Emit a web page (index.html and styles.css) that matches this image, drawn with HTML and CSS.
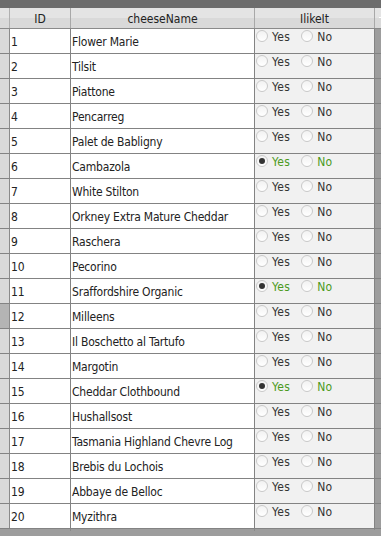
FILE: index.html
```html
<!DOCTYPE html>
<html>
<head>
<meta charset="utf-8">
<link rel="stylesheet" href="styles.css">
</head>
<body>
<div class="topbar"></div>
<div class="grid">
  <div class="row head">
    <div class="cell gut"></div>
    <div class="cell id">ID</div>
    <div class="cell name">cheeseName</div>
    <div class="cell like">IlikeIt</div>
    <div class="cell rest"><span class="tick"></span></div>
  </div>
  <div class="row"><div class="cell gut"></div><div class="cell id">1</div><div class="cell name">Flower Marie</div><div class="cell like"><span class="radio"></span><span class="lbl">Yes</span><span class="radio"></span><span class="lbl">No</span></div><div class="cell rest"></div></div>
  <div class="row"><div class="cell gut"></div><div class="cell id">2</div><div class="cell name">Tilsit</div><div class="cell like"><span class="radio"></span><span class="lbl">Yes</span><span class="radio"></span><span class="lbl">No</span></div><div class="cell rest"></div></div>
  <div class="row"><div class="cell gut"></div><div class="cell id">3</div><div class="cell name">Piattone</div><div class="cell like"><span class="radio"></span><span class="lbl">Yes</span><span class="radio"></span><span class="lbl">No</span></div><div class="cell rest"></div></div>
  <div class="row"><div class="cell gut"></div><div class="cell id">4</div><div class="cell name">Pencarreg</div><div class="cell like"><span class="radio"></span><span class="lbl">Yes</span><span class="radio"></span><span class="lbl">No</span></div><div class="cell rest"></div></div>
  <div class="row"><div class="cell gut"></div><div class="cell id">5</div><div class="cell name">Palet de Babligny</div><div class="cell like"><span class="radio"></span><span class="lbl">Yes</span><span class="radio"></span><span class="lbl">No</span></div><div class="cell rest"></div></div>
  <div class="row sel"><div class="cell gut"></div><div class="cell id">6</div><div class="cell name">Cambazola</div><div class="cell like"><span class="radio on"></span><span class="lbl">Yes</span><span class="radio"></span><span class="lbl">No</span></div><div class="cell rest"></div></div>
  <div class="row"><div class="cell gut"></div><div class="cell id">7</div><div class="cell name">White Stilton</div><div class="cell like"><span class="radio"></span><span class="lbl">Yes</span><span class="radio"></span><span class="lbl">No</span></div><div class="cell rest"></div></div>
  <div class="row"><div class="cell gut"></div><div class="cell id">8</div><div class="cell name">Orkney Extra Mature Cheddar</div><div class="cell like"><span class="radio"></span><span class="lbl">Yes</span><span class="radio"></span><span class="lbl">No</span></div><div class="cell rest"></div></div>
  <div class="row"><div class="cell gut"></div><div class="cell id">9</div><div class="cell name">Raschera</div><div class="cell like"><span class="radio"></span><span class="lbl">Yes</span><span class="radio"></span><span class="lbl">No</span></div><div class="cell rest"></div></div>
  <div class="row"><div class="cell gut"></div><div class="cell id">10</div><div class="cell name">Pecorino</div><div class="cell like"><span class="radio"></span><span class="lbl">Yes</span><span class="radio"></span><span class="lbl">No</span></div><div class="cell rest"></div></div>
  <div class="row sel"><div class="cell gut"></div><div class="cell id">11</div><div class="cell name">Sraffordshire Organic</div><div class="cell like"><span class="radio on"></span><span class="lbl">Yes</span><span class="radio"></span><span class="lbl">No</span></div><div class="cell rest"></div></div>
  <div class="row cur"><div class="cell gut"></div><div class="cell id">12</div><div class="cell name">Milleens</div><div class="cell like"><span class="radio"></span><span class="lbl">Yes</span><span class="radio"></span><span class="lbl">No</span></div><div class="cell rest"></div></div>
  <div class="row"><div class="cell gut"></div><div class="cell id">13</div><div class="cell name">Il Boschetto al Tartufo</div><div class="cell like"><span class="radio"></span><span class="lbl">Yes</span><span class="radio"></span><span class="lbl">No</span></div><div class="cell rest"></div></div>
  <div class="row"><div class="cell gut"></div><div class="cell id">14</div><div class="cell name">Margotin</div><div class="cell like"><span class="radio"></span><span class="lbl">Yes</span><span class="radio"></span><span class="lbl">No</span></div><div class="cell rest"></div></div>
  <div class="row sel"><div class="cell gut"></div><div class="cell id">15</div><div class="cell name">Cheddar Clothbound</div><div class="cell like"><span class="radio on"></span><span class="lbl">Yes</span><span class="radio"></span><span class="lbl">No</span></div><div class="cell rest"></div></div>
  <div class="row"><div class="cell gut"></div><div class="cell id">16</div><div class="cell name">Hushallsost</div><div class="cell like"><span class="radio"></span><span class="lbl">Yes</span><span class="radio"></span><span class="lbl">No</span></div><div class="cell rest"></div></div>
  <div class="row"><div class="cell gut"></div><div class="cell id">17</div><div class="cell name">Tasmania Highland Chevre Log</div><div class="cell like"><span class="radio"></span><span class="lbl">Yes</span><span class="radio"></span><span class="lbl">No</span></div><div class="cell rest"></div></div>
  <div class="row"><div class="cell gut"></div><div class="cell id">18</div><div class="cell name">Brebis du Lochois</div><div class="cell like"><span class="radio"></span><span class="lbl">Yes</span><span class="radio"></span><span class="lbl">No</span></div><div class="cell rest"></div></div>
  <div class="row"><div class="cell gut"></div><div class="cell id">19</div><div class="cell name">Abbaye de Belloc</div><div class="cell like"><span class="radio"></span><span class="lbl">Yes</span><span class="radio"></span><span class="lbl">No</span></div><div class="cell rest"></div></div>
  <div class="row"><div class="cell gut"></div><div class="cell id">20</div><div class="cell name">Myzithra</div><div class="cell like"><span class="radio"></span><span class="lbl">Yes</span><span class="radio"></span><span class="lbl">No</span></div><div class="cell rest"></div></div>
  <div class="row foot">
    <div class="cell gut"></div>
    <div class="cell id"></div>
    <div class="cell name"></div>
    <div class="cell like"></div>
    <div class="cell rest"></div>
  </div>
</div>
</body>
</html>
```
FILE: styles.css
```css
html, body {
  margin: 0;
  padding: 0;
  background: #9d9d9d;
  width: 381px;
  height: 536px;
  overflow: hidden;
}
body {
  font-family: "DejaVu Sans Condensed", "DejaVu Sans", sans-serif;
  font-size: 12px;
  color: #222;
}
.topbar {
  height: 8px;
  background: #6c6c6c;
}
.grid {
  display: flex;
  flex-direction: column;
}
.row {
  display: flex;
  height: 25px;
  box-sizing: border-box;
  border-bottom: 1px solid #838383;
}
.cell {
  box-sizing: border-box;
  border-right: 1px solid #838383;
  height: 100%;
  white-space: nowrap;
  overflow: hidden;
}
.gut { width: 10px; background: #d9d9d9; border-right-color: #8a8a8a; }
.id { width: 61px; background: #fff; display: flex; align-items: center; padding: 2px 0 0 1px; }
.name { width: 184px; background: #fff; display: flex; align-items: center; padding: 2px 0 0 1px; letter-spacing: -0.2px; }
.like { width: 120px; background: #f1f1f1; display: flex; align-items: flex-start; padding: 1px 0 0 1px; color: #333; }
.rest { flex: 1; border-right: 0; background: #9d9d9d; }
.cur .gut { background: #b4b4b4; }

.head {
  height: 21px;
  border-bottom: 1px solid #8a8a8a;
  background: linear-gradient(#e4e4e4, #e4e4e4 50%, #d9d9d9 50%, #d9d9d9);
}
.head .cell {
  background: transparent;
  justify-content: center;
  align-items: center;
  padding: 1px 0 0 0;
  color: #222;
  letter-spacing: 0;
  border-right-color: #a8a8a8;
}
.head .gut { border-right-color: #b0b0b0; }
.head .rest { position: relative; }
.tick {
  position: absolute;
  left: 4px;
  top: 9px;
  width: 3px;
  height: 1px;
  background: #fff;
}

.radio {
  width: 12px;
  height: 12px;
  box-sizing: border-box;
  border: 1px solid #c9c9c9;
  border-radius: 50%;
  background: linear-gradient(#f2f2f2, #ffffff);
  margin: 0 4px 0 0;
  display: flex;
  align-items: center;
  justify-content: center;
  flex: none;
}
.radio.on::after {
  content: "";
  width: 6px;
  height: 6px;
  border-radius: 50%;
  background: #333;
}
.lbl { margin-right: 11px; letter-spacing: 0.3px; }
.sel .lbl { color: #4b9a1e; }

.foot {
  flex: 1;
  height: 8px;
  border-bottom: 0;
}
.foot .cell { background: #9d9d9d; border-right-color: #8a8a8a; }
.foot .gut { background: #c9c9c9; }
```
